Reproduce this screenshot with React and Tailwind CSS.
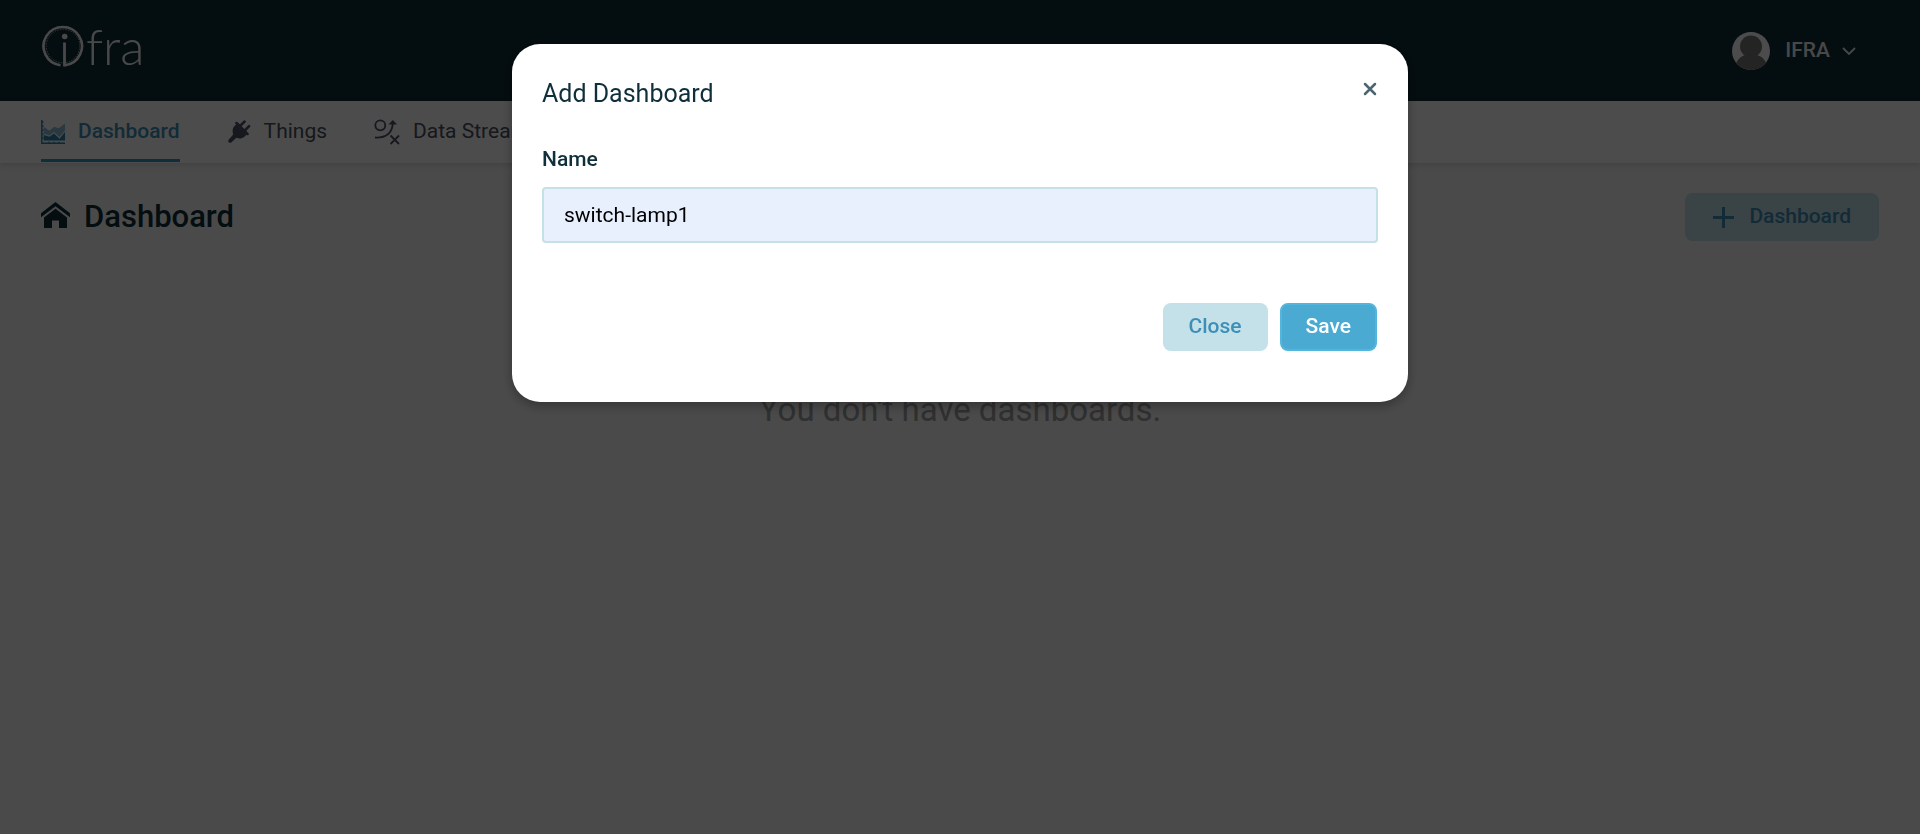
import { useState } from "react";

function LogoMark() {
  return (
    <svg viewBox="0 0 42 44" className="h-11 w-[42px]" fill="none" aria-hidden="true">
      <path d="M18.5 41.200A19.2 19.2 0 1 1 23 41.200" stroke="#f5f5f5" strokeWidth="2.6" />
      <circle cx="21" cy="22" r="16.8" stroke="#b5c4ca" strokeWidth="1" strokeDasharray="1.5 1.2" />
      <circle cx="22.7" cy="12.5" r="2.8" fill="#f5f5f5" />
      <path d="M22.5 18.500v24" stroke="#f5f5f5" strokeWidth="2.8" />
    </svg>
  );
}

function AreaChartIcon() {
  return (
    <svg viewBox="0 0 24 24" className="size-6" aria-hidden="true">
      <path d="M2.700 6.700 8.300 10.700 13.300 6.700 17.700 8.300 24 3.500V10.500L18.500 17 13 12 8.500 15.500 2.700 13.500z" fill="#8cc0d4" />
      <path d="M2.700 20.500V15L8.500 16.800 13 13.500 18.500 18.700 24 12V20.500z" fill="#2a86ad" />
      <path d="M.8 0v23.200H24M1 2h1.500M1 6h1.500M1 10h1.500M1 14h1.500M1 18h1.500M8 21.700v1.500M13 21.700v1.500M18 21.700v1.500" stroke="#2a86ad" strokeWidth="1.400" fill="none" />
    </svg>
  );
}

function PlugIcon() {
  return (
    <svg viewBox="0 0 24 24" className="size-6" aria-hidden="true">
      <path d="M9.300 4.200 19.600 14.500l-2.200 2.200c-2.200 2-5.300 2.200-8 1.100L4.200 22.400c-1.800 1.400-4-.8-2.600-2.600L6.200 14.500C5.200 11.500 5.300 8.500 7.300 6.200z" fill="#4b5163" />
      <path d="m9.500 3 11 11M13.200 5.800 17.600 1.500M17.800 10.500l4.300-4.300" stroke="#4b5163" strokeWidth="2.500" strokeLinecap="round" />
    </svg>
  );
}

function StreamIcon() {
  return (
    <svg viewBox="0 0 26 26" className="size-[26px]" fill="none" stroke="#4b5163" strokeWidth="1.800" aria-hidden="true">
      <circle cx="6.300" cy="6.300" r="5" />
      <path d="M1 18.500C12 19 18.500 14 18.800 4" />
      <path d="m14.500 5.500 4.300-4.500 4.300 4.500z" fill="#4b5163" stroke="none" />
      <path d="m16.500 16.500 8.500 8.500M25 16.500 16.500 25" />
    </svg>
  );
}

function HomeIcon() {
  return (
    <svg viewBox="0 0 29 26" className="mb-1 h-[26px] w-[29px]" fill="#0f2f3b" aria-hidden="true">
      <path d="M14.500 0 29 11.200v4L14.500 4.200 0 15.200v-4z" />
      <path d="M14.500 6.800 26 15.500V26h-8v-7.500h-7V26H3V15.500z" />
    </svg>
  );
}

function Avatar() {
  return (
    <svg viewBox="0 0 38 38" className="size-[38px] rounded-full" aria-hidden="true">
      <rect width="38" height="38" fill="#fff" />
      <circle cx="19" cy="14.500" r="11" fill="#787878" />
      <path d="M13.500 20h11v3c5 1 8.500 4.500 10 9L28 38H10l-6-6c1.500-4.500 5-8 9.500-9z" fill="#787878" />
    </svg>
  );
}

const tabs = [
  { label: "Dashboard", icon: AreaChartIcon, active: true },
  { label: "Things", icon: PlugIcon },
  { label: "Data Streams", icon: StreamIcon },
];

export default function App() {
  const [name, setName] = useState("switch-lamp1");

  return (
    <div className="min-h-screen bg-[#f7f7f7] font-[Roboto,sans-serif] text-[#0f2f3b]">
      <header className="flex h-[101px] items-center justify-between bg-[#102c36] pr-16 pl-[42px]">
        <a href="#home" className="flex items-center gap-0.5 pb-2.5 text-[#f5f5f5]">
          <LogoMark />
          <span className="font-[Lato,sans-serif] text-[50px] leading-[52px] font-light">fra</span>
        </a>
        <button type="button" className="flex items-center text-[21px] font-medium text-[#f0f0f0]">
          <Avatar />
          <span className="ml-[15px]">IFRA</span>
          <svg viewBox="0 0 14 8" className="ml-3 h-2 w-3.5" fill="none" stroke="currentColor" strokeWidth="1.800" aria-hidden="true">
            <path d="m1 1 6 6 6-6" />
          </svg>
        </button>
      </header>

      <nav className="flex h-[62px] gap-[47px] bg-white px-[41px] text-[21px] shadow-[0_2px_6px_rgba(0,0,0,0.12)]">
        {tabs.map(({ label, icon: Icon, active }) => (
          <a
            key={label}
            href="#tab"
            className={
              active
                ? "mb-px flex items-center gap-[13px] border-b-3 border-[#3299c4] pt-1 font-medium text-[#3d8fb8]"
                : "flex items-center gap-[13px] text-[#4b5163]"
            }
          >
            <Icon />
            {label}
          </a>
        ))}
      </nav>

      <main className="px-[41px] pt-[30px]">
        <div className="flex h-12 items-center justify-between">
          <h1 className="flex items-center gap-3.5 text-[31px] font-medium">
            <HomeIcon />
            Dashboard
          </h1>
          <button type="button" className="flex h-12 items-center gap-[15px] rounded-lg bg-[#c4e0e8] px-7 text-[21px] font-medium text-[#3d8fb8]">
            <svg viewBox="0 0 21 21" className="size-[21px]" stroke="currentColor" strokeWidth="3" aria-hidden="true">
              <path d="M10.500 0v21M0 10.500h21" />
            </svg>
            Dashboard
          </button>
        </div>
        <p className="mt-[149px] text-center text-[33px] leading-10 text-[#a0a0a0]">You don't have dashboards.</p>
      </main>

      <div className="fixed inset-0 bg-black/70 px-8 pt-11">
        <div
          role="dialog"
          aria-modal="true"
          aria-labelledby="dialog-title"
          className="mx-auto max-w-4xl rounded-[28px] bg-white px-[30px] pt-[34px] pb-[51px] shadow-[0_4px_12px_rgba(0,0,0,0.3)]"
        >
          <div className="flex items-start justify-between">
            <h2 id="dialog-title" className="text-[25px] leading-8">Add Dashboard</h2>
            <button type="button" aria-label="Close dialog" className="mt-[3px] flex size-4 items-center justify-center text-[#4b6670]">
              <svg viewBox="0 0 14 14" className="size-3.5" stroke="currentColor" strokeWidth="2.500" strokeLinecap="round" aria-hidden="true">
                <path d="m2 2 10 10M12 2 2 12" />
              </svg>
            </button>
          </div>
          <form onSubmit={(e) => e.preventDefault()}>
            <label htmlFor="name" className="mt-[35px] block text-[21px] leading-7 font-medium">Name</label>
            <input
              id="name"
              value={name}
              onChange={(e) => setName(e.target.value)}
              className="mt-3.5 block h-14 w-full rounded-sm border-2 border-[#c4e0e8] bg-[#e8f0fe] px-5 text-[21px] text-black outline-none"
            />
            <div className="mt-[60px] flex justify-end gap-3 pr-px text-[21px] font-medium">
              <button type="button" className="h-12 rounded-lg bg-[#c4e0e8] px-[26px] text-[#3d8fb8]">Close</button>
              <button type="submit" className="h-12 rounded-lg border-2 border-[#51b5de] bg-[#4baad1] px-6 text-white">Save</button>
            </div>
          </form>
        </div>
      </div>
    </div>
  );
}
